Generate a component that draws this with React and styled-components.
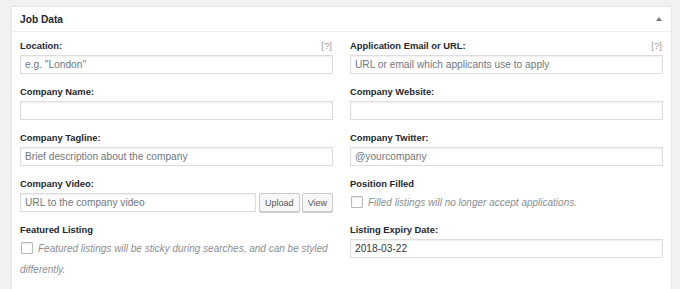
import React from 'react';
import styled, { createGlobalStyle } from 'styled-components';

const GlobalStyle = createGlobalStyle`
  html, body {
    margin: 0;
    padding: 0;
    background: #f1f1f1;
  }
  body {
    padding: 6px 8px 0 11px;
    font-family: "Liberation Sans", Arial, sans-serif;
    color: #23282d;
  }
`;

const JobData = () => {
    return (
        <Panel>
            <Header>
                <Title>Job Data</Title>
                <Toggle />
            </Header>
            <Body>
                <Field>
                    <LabelRow>
                        <Label>Location:</Label>
                        <Tip>[?]</Tip>
                    </LabelRow>
                    <Input placeholder='e.g. "London"' />
                </Field>
                <Field>
                    <LabelRow>
                        <Label>Application Email or URL:</Label>
                        <Tip>[?]</Tip>
                    </LabelRow>
                    <Input placeholder="URL or email which applicants use to apply" />
                </Field>
                <Field>
                    <LabelRow><Label>Company Name:</Label></LabelRow>
                    <Input />
                </Field>
                <Field>
                    <LabelRow><Label>Company Website:</Label></LabelRow>
                    <Input />
                </Field>
                <Field>
                    <LabelRow><Label>Company Tagline:</Label></LabelRow>
                    <Input placeholder="Brief description about the company" />
                </Field>
                <Field>
                    <LabelRow><Label>Company Twitter:</Label></LabelRow>
                    <Input placeholder="@yourcompany" />
                </Field>
                <Field>
                    <LabelRow><Label>Company Video:</Label></LabelRow>
                    <FileRow>
                        <Input placeholder="URL to the company video" />
                        <Button>Upload</Button>
                        <Button>View</Button>
                    </FileRow>
                </Field>
                <Field>
                    <LabelRow><Label>Position Filled</Label></LabelRow>
                    <Desc>
                        <Check type="checkbox" />
                        Filled listings will no longer accept applications.
                    </Desc>
                </Field>
                <Field>
                    <LabelRow><Label>Featured Listing</Label></LabelRow>
                    <Desc>
                        <Check type="checkbox" />
                        Featured listings will be sticky during searches, and can be styled differently.
                    </Desc>
                </Field>
                <Field>
                    <LabelRow><Label>Listing Expiry Date:</Label></LabelRow>
                    <Input defaultValue="2018-03-22" />
                </Field>
            </Body>
        </Panel>
    );
};

export default function App() {
    return (
        <>
            <GlobalStyle />
            <JobData />
        </>
    );
}

const Panel = styled.div`
    background: #fff;
    border: 1px solid #e5e5e5;
    box-shadow: 0 1px 1px rgba(0, 0, 0, 0.04);
`;

const Header = styled.div`
    height: 24px;
    display: flex;
    align-items: center;
    justify-content: space-between;
    padding: 0 9px 0 8px;
    border-bottom: 1px solid #eee;
`;

const Title = styled.h2`
    margin: 0;
    font-size: 10.2px;
    font-weight: bold;
    color: #23282d;
`;

const Toggle = styled.span`
    width: 0;
    height: 0;
    border-left: 3px solid transparent;
    border-right: 3px solid transparent;
    border-bottom: 4px solid #72777c;
`;

const Body = styled.div`
    display: grid;
    grid-template-columns: 1fr 1fr;
    column-gap: 17px;
    padding: 7px 8px 20px;
`;

const Field = styled.div`
    margin-bottom: 11px;
`;

const LabelRow = styled.div`
    display: flex;
    justify-content: space-between;
    align-items: center;
    height: 12px;
    margin-bottom: 4px;
`;

const Label = styled.label`
    font-size: 9.4px;
    font-weight: bold;
    color: #23282d;
`;

const Tip = styled.span`
    font-size: 9.6px;
    color: #999;
    padding-right: 1px;
`;

const Input = styled.input`
    display: block;
    box-sizing: border-box;
    width: 100%;
    height: 19px;
    margin: 0;
    padding: 0 4px;
    border: 1px solid #ddd;
    border-radius: 0;
    box-shadow: inset 0 1px 2px rgba(0, 0, 0, 0.07);
    background: #fff;
    font-family: "Liberation Sans", Arial, sans-serif;
    font-size: 10.2px;
    color: #32373c;
    outline: none;

    &::placeholder {
        color: #72777c;
        opacity: 1;
    }
`;

const FileRow = styled.div`
    display: flex;
    gap: 2px;

    ${Input} {
        flex: 1;
        margin-right: 1px;
    }
`;

const Button = styled.button`
    box-sizing: border-box;
    height: 19px;
    margin: 0;
    padding: 0 5px;
    border: 1px solid #ccc;
    border-radius: 2px;
    background: #f7f7f7;
    box-shadow: 0 1px 0 #ccc;
    font-family: "Liberation Sans", Arial, sans-serif;
    font-size: 9px;
    color: #555;
`;

const Desc = styled.div`
    margin: -1px 0 -1px;
    font-size: 10px;
    line-height: 21px;
    font-style: italic;
    color: #8a8f94;
`;

const Check = styled.input`
    appearance: none;
    box-sizing: border-box;
    width: 12px;
    height: 12px;
    margin: 0 5px 0 1px;
    vertical-align: -2px;
    border: 1px solid #b4b9be;
    border-radius: 1px;
    background: #fff;
    box-shadow: inset 0 1px 2px rgba(0, 0, 0, 0.1);
`;
